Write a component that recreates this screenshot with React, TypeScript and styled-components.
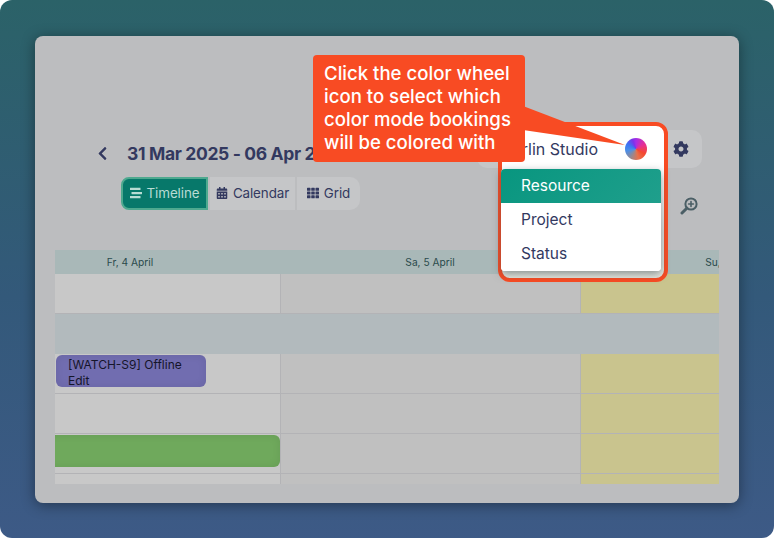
import React from 'react'
import styled, { createGlobalStyle } from 'styled-components'
import { FaStream, FaCalendarAlt, FaTh, FaCog, FaChevronLeft } from 'react-icons/fa'

const GlobalStyle = createGlobalStyle`
	html, body {
		margin: 0;
		padding: 0;
		background: #fff;
		font-family: Inter, 'Liberation Sans', sans-serif;
	}
`

const Page = styled.div`
	width: 774px;
	height: 538px;
	box-sizing: border-box;
	padding: 36px 35px 35px;
	border-radius: 12px;
	overflow: hidden;
	background: linear-gradient(180deg, #2b6268 0%, #33597a 55%, #3d5a86 100%);
`

const Window = styled.div`
	position: relative;
	height: 467px;
	box-sizing: border-box;
	padding: 94px 20px 0;
	border-radius: 8px;
	background: #bcbdbf;
	box-shadow: 0 2px 14px rgba(0, 0, 0, 0.4);
`

const HeaderRow = styled.div`
	display: flex;
	align-items: flex-start;
	justify-content: space-between;
	height: 38px;
	padding: 0 17px 0 40px;
`

const DateNav = styled.div`
	display: flex;
	align-items: center;
	gap: 17px;
	height: 38px;
	margin-top: 4px;
	color: #33395f;
`

const DateTitle = styled.div`
	font-size: 17.5px;
	font-weight: 700;
	letter-spacing: -0.35px;
	white-space: nowrap;
`

const ControlPill = styled.div`
	display: flex;
	align-items: center;
	width: 225px;
	height: 38px;
	box-sizing: border-box;
	padding-right: 13px;
	border-radius: 10px;
	background: #c5c6c8;
	color: #33395f;
`

const StudioName = styled.div`
	position: relative;
	z-index: 2;
	margin-left: 25px;
	width: 123px;
	font-size: 16px;
	white-space: nowrap;
`

const ColorWheel = styled.div`
	position: relative;
	z-index: 2;
	width: 22px;
	height: 22px;
	border-radius: 50%;
	background: conic-gradient(
		#a52fe6 0deg,
		#e62f95 60deg,
		#f4492e 120deg,
		#e8704a 165deg,
		#98888e 210deg,
		#4b8fe8 260deg,
		#3c74f2 300deg,
		#7c32ea 340deg,
		#a52fe6 360deg
	);
`

const SettingsIcon = styled(FaCog)`
	margin-left: auto;
	font-size: 16px;
`

const ToolbarRow = styled.div`
	display: flex;
	align-items: flex-start;
	justify-content: space-between;
	height: 33px;
	margin-top: 9px;
	padding: 0 21px 0 66px;
`

const ViewGroup = styled.div`
	display: flex;
	gap: 2px;
`

const ViewButton = styled.div<{ $active?: boolean; $width: number; $last?: boolean }>`
	display: flex;
	align-items: center;
	justify-content: center;
	gap: 5px;
	width: ${p => p.$width}px;
	height: 33px;
	box-sizing: border-box;
	padding-bottom: 1px;
	font-size: 13.4px;
	letter-spacing: -0.1px;
	color: ${p => (p.$active ? '#b9dcd4' : '#33395f')};
	background: ${p => (p.$active ? '#07786a' : '#c5c6c8')};
	border: ${p => (p.$active ? '2px solid #4ea98f' : 'none')};
	border-radius: ${p => (p.$active ? '8px 0 0 8px' : p.$last ? '0 10px 10px 0' : '0')};

	svg {
		font-size: 12px;
	}
`

const ZoomIcon = styled.svg`
	width: 18px;
	height: 18px;
	margin-top: 20px;
	fill: none;
	stroke: #4b5f66;
	stroke-width: 2;
	stroke-linecap: round;
`

const Timeline = styled.div`
	height: 234px;
	margin-top: 40px;
	overflow: hidden;
`

const Row = styled.div<{ $band?: boolean }>`
	display: flex;
	height: 40px;
	margin-left: -75px;
	background: ${p => (p.$band ? '#b2babd' : 'transparent')};
`

const HeaderCells = styled.div`
	display: flex;
	height: 24px;
	background: #a9b8b8;
`

const DayLabel = styled.div`
	flex: 0 0 300px;
	text-align: center;
	font-size: 10.2px;
	line-height: 24px;
	color: #2a4a4c;
	&:first-child {
		margin-left: -75px;
	}
`

const Cell = styled.div<{ $kind: 'fri' | 'sat' | 'sun' }>`
	flex: 0 0 ${p => (p.$kind === 'fri' ? 301 : 300)}px;
	box-sizing: border-box;
	padding-top: 1px;
	border-right: 1px solid #b3b3b6;
	border-bottom: 1px solid #b3b3b6;
	background: ${p =>
		p.$kind === 'fri' ? '#c8c8c8' : p.$kind === 'sat' ? '#c0c0c0' : '#c9c48e'};
`

const Booking = styled.div<{ $color: string; $width: number; $offset: number; $square?: boolean }>`
	width: ${p => p.$width}px;
	height: 32px;
	margin-left: ${p => p.$offset}px;
	box-sizing: border-box;
	padding: 2px 12px 0;
	overflow: hidden;
	border-radius: ${p => (p.$square ? '0 6px 6px 0' : '6px')};
	background: ${p => p.$color};
	box-shadow: inset 0 0 8px rgba(0, 0, 0, 0.08);
	font-size: 12px;
	line-height: 16px;
	color: #15152a;
`

const Callout = styled.div`
	position: absolute;
	z-index: 3;
	left: 278px;
	top: 19px;
	width: 212px;
	height: 107px;
	box-sizing: border-box;
	padding: 7px 0 7px 11px;
	border-radius: 4px;
	background: #f84b23;
	color: #fff;
	font-size: 18.6px;
	font-weight: 500;
	line-height: 23px;
`

const CalloutTail = styled.svg`
	position: absolute;
	z-index: 3;
	left: 488px;
	top: 68px;
	width: 104px;
	height: 44px;
	fill: #f84b23;
`

const Highlight = styled.div`
	position: absolute;
	z-index: 1;
	left: 463px;
	top: 86px;
	width: 170px;
	height: 160px;
	box-sizing: border-box;
	border: 4px solid #f84b23;
	border-radius: 12px;
	background: linear-gradient(180deg, #fff 0%, #fff 32%, #dfe3e2 70%, #e6e8df 100%);
`

const Menu = styled.div`
	position: absolute;
	z-index: 2;
	left: -1px;
	top: 43px;
	width: 160px;
	overflow: hidden;
	border-radius: 4px;
	background: #fff;
	box-shadow: 0 3px 8px rgba(60, 75, 80, 0.55);
`

const MenuItem = styled.div<{ $active?: boolean }>`
	height: 34px;
	padding-left: 20px;
	font-size: 15.5px;
	line-height: 33px;
	color: ${p => (p.$active ? '#fff' : '#33395f')};
	background: ${p => (p.$active ? 'linear-gradient(135deg, #08967f, #1f9f8c)' : '#fff')};
`

const rows = [
	{ key: 'r1' },
	{ key: 'band', band: true },
	{ key: 'r3', booking: 'purple' },
	{ key: 'r4' },
	{ key: 'r5', booking: 'green' },
	{ key: 'r6' },
]

export default function App() {
	return (
		<>
			<GlobalStyle />
			<Page>
				<Window>
					<HeaderRow>
						<DateNav>
							<FaChevronLeft size={15} />
							<DateTitle>31 Mar 2025 - 06 Apr 2025</DateTitle>
						</DateNav>
						<ControlPill>
							<StudioName>Berlin Studio</StudioName>
							<ColorWheel />
							<SettingsIcon />
						</ControlPill>
					</HeaderRow>

					<ToolbarRow>
						<ViewGroup>
							<ViewButton $active $width={87}>
								<FaStream />
								Timeline
							</ViewButton>
							<ViewButton $width={85}>
								<FaCalendarAlt />
								Calendar
							</ViewButton>
							<ViewButton $width={63} $last>
								<FaTh />
								Grid
							</ViewButton>
						</ViewGroup>
						<ZoomIcon viewBox='0 0 18 18'>
							<circle cx='11' cy='7' r='5.6' />
							<path d='M11 4.6v4.8M8.6 7h4.8' strokeWidth='1.6' />
							<path d='M6.8 11.2L2 16' strokeWidth='3' />
						</ZoomIcon>
					</ToolbarRow>

					<Timeline>
						<HeaderCells>
							<DayLabel>Fr, 4 April</DayLabel>
							<DayLabel>Sa, 5 April</DayLabel>
							<DayLabel>Su, 6 April</DayLabel>
						</HeaderCells>
						{rows.map(row =>
							row.band ? (
								<Row key={row.key} $band />
							) : (
								<Row key={row.key}>
									<Cell $kind='fri'>
										{row.booking === 'purple' ? (
											<Booking $color='#716db0' $width={150} $offset={76}>
												[WATCH-S9] Offline Edit
											</Booking>
										) : null}
										{row.booking === 'green' ? (
											<Booking $color='#6fa95c' $width={300} $offset={0} $square />
										) : null}
									</Cell>
									<Cell $kind='sat' />
									<Cell $kind='sun' />
								</Row>
							)
						)}
					</Timeline>

					<Highlight>
						<Menu>
							<MenuItem $active>Resource</MenuItem>
							<MenuItem>Project</MenuItem>
							<MenuItem>Status</MenuItem>
						</Menu>
					</Highlight>
					<Callout>
						Click the color wheel icon to select which color mode bookings will be colored with
					</Callout>
					<CalloutTail viewBox='0 0 104 44'>
						<path d='M0 2L102 41L0 26Z' />
					</CalloutTail>
				</Window>
			</Page>
		</>
	)
}
